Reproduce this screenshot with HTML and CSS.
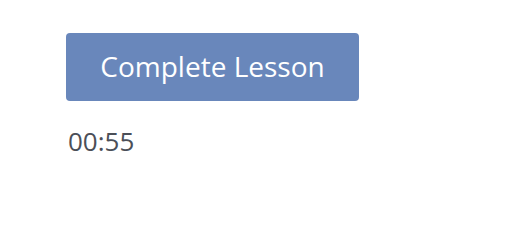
FILE: index.html
```html
<!DOCTYPE html>
<html>
<head>
<meta charset="utf-8">
<link rel="stylesheet" href="styles.css">
</head>
<body>
<div class="lesson">
  <button class="complete-btn" type="button">Complete Lesson</button>
  <div class="timer">00:55</div>
</div>
</body>
</html>
```
FILE: styles.css
```css
html, body {
  margin: 0;
  padding: 0;
  background: #ffffff;
}
body {
  font-family: "Open Sans", "Noto Sans", sans-serif;
}
.lesson {
  display: flex;
  flex-direction: column;
  align-items: flex-start;
  padding: 33px 0 0 66px;
  gap: 22px;
}
.complete-btn {
  box-sizing: border-box;
  width: 293px;
  height: 68px;
  border: none;
  border-radius: 4px;
  background: #6987bb;
  color: #ffffff;
  font-family: "Open Sans", "Noto Sans", sans-serif;
  font-size: 28px;
  padding: 0 0 2px 0;
  margin: 0;
}
.timer {
  font-size: 26px;
  line-height: 36px;
  color: #4b4f58;
  padding-left: 2px;
}
```
